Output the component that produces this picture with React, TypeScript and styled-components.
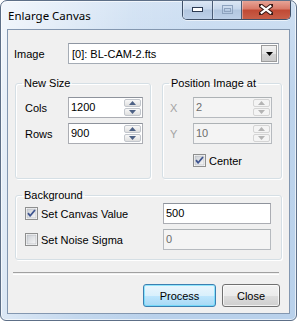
import styled, {createGlobalStyle} from "styled-components";

const GlobalStyle = createGlobalStyle`
    html, body {
        margin: 0;
        padding: 0;
        background: #ffffff;
    }

    body {
        font-family: "Liberation Sans", Arial, sans-serif;
        font-size: 11px;
        color: #000000;
    }
`

const Window = styled.div`
    display: flex;
    flex-direction: column;

    box-sizing: border-box;
    width: 297px;
    height: 321px;

    padding: 0 6px 6px 6px;

    border: 1px solid #5d6f87;
    border-radius: 7px 7px 6px 6px;

    background: linear-gradient(100deg, rgba(255, 255, 255, 0.75) 0%, rgba(255, 255, 255, 0.15) 38%, rgba(255, 255, 255, 0) 60%),
    linear-gradient(180deg, #cfe0f3 0%, #bed4ec 30%, #b9d1eb 100%);
    box-shadow: inset 0 0 0 1px rgba(255, 255, 255, 0.65);

    overflow: hidden;
`

const TitleBar = styled.div`
    display: flex;
    flex-direction: row;

    align-items: flex-start;
    justify-content: space-between;

    height: 28px;
`

const Title = styled.span`
    margin: 7px 0 0 1px;

    font-family: "Noto Sans", "Liberation Sans", sans-serif;
    font-size: 11.5px;
    line-height: 15px;
    color: #000000;
`

const CaptionButtons = styled.div`
    display: flex;
    flex-direction: row;

    margin: -1px -1px 0 0;

    border: 1px solid #3f5068;
    border-top: none;
    border-radius: 0 0 5px 5px;

    overflow: hidden;
    box-shadow: 0 1px 0 rgba(255, 255, 255, 0.6);
`

const CaptionButton = styled.div<{ $kind: "min" | "max" | "close" }>`
    display: flex;
    align-items: center;
    justify-content: center;

    width: ${({$kind}) => ($kind === "close" ? 48 : $kind === "max" ? 28 : 29)}px;
    height: 19px;

    border-left: ${({$kind}) => ($kind === "min" ? "none" : "1px solid #4a5c76")};
    box-shadow: inset 0 1px 0 rgba(255, 255, 255, 0.5), inset 1px 0 0 rgba(255, 255, 255, 0.35);

    background: ${({$kind}) => $kind === "close"
            ? "linear-gradient(180deg, #e8a99c 0%, #d97b6a 45%, #c14a35 55%, #c8604a 100%)"
            : "linear-gradient(180deg, #dfe9f5 0%, #c8d8ec 45%, #b3c7e0 55%, #bdd0e8 100%)"};
`

const Client = styled.div`
    display: flex;
    flex-direction: column;

    flex: 1;

    border: 1px solid #8397b0;

    background: #f0f0f0;
`

const ImageRow = styled.div`
    display: flex;
    flex-direction: row;
    align-items: center;

    margin-top: 13px;
    padding-left: 6px;
`

const FieldLabel = styled.span<{ $width: number, $disabled?: boolean }>`
    width: ${({$width}) => $width}px;
    flex-shrink: 0;

    color: ${({$disabled}) => ($disabled ? "#a3a3a3" : "#000000")};
`

const Combo = styled.div`
    display: flex;
    flex-direction: row;
    align-items: center;

    box-sizing: border-box;
    width: 211px;
    height: 21px;

    padding: 1px;

    border: 1px solid #a5acb5;
    border-top-color: #8e96a2;

    background: #ffffff;
`

const ComboText = styled.span`
    flex: 1;

    padding-left: 2px;
`

const ComboArrow = styled.div`
    display: flex;
    align-items: center;
    justify-content: center;

    box-sizing: border-box;
    width: 16px;
    height: 17px;

    border: 1px solid #9c9c9c;

    background: linear-gradient(180deg, #f2f2f2 0%, #e4e4e4 50%, #d2d2d2 51%, #cbcbcb 100%);
`

const GroupsRow = styled.div`
    display: flex;
    flex-direction: row;

    gap: 11px;

    margin-top: 13px;
    padding: 0 7px;
`

const Group = styled.fieldset<{ $width: number, $height: number, $padLeft: number, $padTop: number }>`
    display: flex;
    flex-direction: column;

    box-sizing: border-box;
    width: ${({$width}) => $width}px;
    height: ${({$height}) => $height}px;

    margin: 0;
    padding: ${({$padTop, $padLeft}) => `${$padTop}px 0 0 ${$padLeft}px`};

    border: 1px solid #d5dfe5;
    border-radius: 3px;

    box-shadow: inset 1px 1px 0 #ffffff, 1px 1px 0 #ffffff;

    & > legend {
        margin-left: ${({$padLeft}) => 6 - $padLeft}px;
    }
`

const Legend = styled.legend`
    padding: 0 2px;

    font-size: 11px;
    line-height: 13px;
    color: #000000;
`

const FieldRow = styled.div`
    display: flex;
    flex-direction: row;
    align-items: center;

    height: 21px;

    & + & {
        margin-top: 5px;
    }
`

const NumericBox = styled.div<{ $width: number, $disabled?: boolean }>`
    display: flex;
    flex-direction: row;

    box-sizing: border-box;
    width: ${({$width}) => $width}px;
    height: 21px;

    border: 1px solid ${({$disabled}) => ($disabled ? "#b6babf" : "#abadb3")};
    border-top-color: ${({$disabled}) => ($disabled ? "#adb2b5" : "#8e939c")};

    background: ${({$disabled}) => ($disabled ? "#f4f4f4" : "#ffffff")};
`

const NumericValue = styled.span<{ $disabled?: boolean }>`
    flex: 1;

    padding-left: 2px;

    line-height: 19px;
    color: ${({$disabled}) => ($disabled ? "#6d6d6d" : "#000000")};
`

const Spinner = styled.div`
    display: flex;
    flex-direction: column;

    gap: 1px;

    width: 17px;
    padding: 1px;
`

const SpinButton = styled.div<{ $disabled?: boolean }>`
    display: flex;
    align-items: center;
    justify-content: center;

    box-sizing: border-box;
    flex: 1;

    border: 1px solid ${({$disabled}) => ($disabled ? "#d4d4d4" : "#c2c6cc")};
    border-radius: 2px;

    background: ${({$disabled}) => ($disabled
            ? "#f4f4f4"
            : "linear-gradient(180deg, #f8f8f8 0%, #ececec 50%, #dfdfdf 100%)")};
`

const CheckRow = styled.label<{ $indent?: number }>`
    display: flex;
    flex-direction: row;
    align-items: center;

    gap: 3px;

    margin-left: ${({$indent}) => $indent ?? 0}px;
`

const CheckLabel = styled.span<{ $width?: number }>`
    width: ${({$width}) => ($width ? `${$width}px` : "auto")};
`

const CenterRow = styled.div`
    margin-top: 10px;
`

const TextBox = styled.div<{ $disabled?: boolean }>`
    box-sizing: border-box;
    width: 108px;
    height: 21px;

    padding-left: 2px;

    border: 1px solid ${({$disabled}) => ($disabled ? "#b6babf" : "#abadb3")};
    border-top-color: ${({$disabled}) => ($disabled ? "#adb2b5" : "#8e939c")};

    background: ${({$disabled}) => ($disabled ? "#f4f4f4" : "#ffffff")};

    line-height: 19px;
    color: ${({$disabled}) => ($disabled ? "#6d6d6d" : "#000000")};
`

const BackgroundWrap = styled.div`
    margin-top: 10px;
    padding: 0 7px;
`

const Separator = styled.div`
    height: 1px;

    margin: 12px 10px 0 5px;

    border-top: 1px solid #a0a0a0;
    border-bottom: 1px solid #ffffff;
`

const ButtonsRow = styled.div`
    display: flex;
    flex-direction: row;
    justify-content: flex-end;

    gap: 6px;

    margin-top: 9px;
    padding-right: 9px;
`

const Button = styled.button<{ $default?: boolean, $width: number }>`
    box-sizing: border-box;
    width: ${({$width}) => $width}px;
    height: 23px;

    padding: 0;

    border: 1px solid ${({$default}) => ($default ? "#3c7fb1" : "#707070")};
    border-radius: 3px;

    background: ${({$default}) => ($default
            ? "linear-gradient(180deg, #eaf6fd 0%, #d9f0fc 50%, #bee6fd 51%, #a7d9f5 100%)"
            : "linear-gradient(180deg, #f2f2f2 0%, #ebebeb 50%, #dddddd 51%, #cfcfcf 100%)")};
    box-shadow: inset 0 0 0 1px ${({$default}) => ($default ? "rgba(72, 216, 251, 0.55)" : "rgba(255, 255, 255, 0.7)")};

    font-family: "Liberation Sans", Arial, sans-serif;
    font-size: 11px;
    color: #000000;
`

const UpArrow = ({disabled}: { disabled?: boolean }) => (
	<svg width="7" height="4" viewBox="0 0 7 4">
		<path d="M0 4 L3.5 0 L7 4 Z" fill={disabled ? "#b4b4b4" : "#4d6185"}/>
	</svg>
)

const DownArrow = ({disabled}: { disabled?: boolean }) => (
	<svg width="7" height="4" viewBox="0 0 7 4">
		<path d="M0 0 L7 0 L3.5 4 Z" fill={disabled ? "#b4b4b4" : "#4d6185"}/>
	</svg>
)

const CheckBox = ({checked}: { checked?: boolean }) => (
	<svg width="13" height="13" viewBox="0 0 13 13">
		<defs>
			<linearGradient id="cbfill" x1="0" y1="0" x2="1" y2="1">
				<stop offset="0" stopColor="#cbcfd5"/>
				<stop offset="1" stopColor="#f7f7f7"/>
			</linearGradient>
		</defs>
		<rect x="0.5" y="0.5" width="12" height="12" fill="#ffffff" stroke="#8e8f8f"/>
		<rect x="2" y="2" width="9" height="9" fill="url(#cbfill)" stroke="#aeb3b9" strokeWidth="0.6"/>
		{checked && (
			<path d="M3 6.2 L5.2 8.8 L10 3" fill="none" stroke="#3f5590" strokeWidth="1.8"
				  strokeLinejoin="round"/>
		)}
	</svg>
)

const NumericField = ({value, width, disabled}: { value: string, width: number, disabled?: boolean }) => (
	<NumericBox $width={width} $disabled={disabled}>
		<NumericValue $disabled={disabled}>{value}</NumericValue>
		<Spinner>
			<SpinButton $disabled={disabled}><UpArrow disabled={disabled}/></SpinButton>
			<SpinButton $disabled={disabled}><DownArrow disabled={disabled}/></SpinButton>
		</Spinner>
	</NumericBox>
)

export default function App() {
	return (
		<>
			<GlobalStyle/>
			<Window>
				<TitleBar>
					<Title>Enlarge Canvas</Title>
					<CaptionButtons>
						<CaptionButton $kind="min">
							<svg width="11" height="5" viewBox="0 0 11 5">
								<rect x="0.5" y="0.5" width="10" height="4" fill="#ffffff" stroke="#2c3a52"/>
							</svg>
						</CaptionButton>
						<CaptionButton $kind="max">
							<svg width="11" height="9" viewBox="0 0 11 9">
								<rect x="0.5" y="0.5" width="10" height="8" fill="none" stroke="#8ea3bf"/>
								<rect x="2.5" y="3.5" width="6" height="3" fill="none" stroke="#8ea3bf"/>
							</svg>
						</CaptionButton>
						<CaptionButton $kind="close">
							<svg width="14" height="11" viewBox="0 0 14 11">
								<path d="M1 1 L13 10 M13 1 L1 10" stroke="#3b1a16" strokeWidth="4.2"
									  strokeLinecap="square"/>
								<path d="M1.8 1.6 L12.2 9.4 M12.2 1.6 L1.8 9.4" stroke="#ffffff" strokeWidth="2.2"/>
							</svg>
						</CaptionButton>
					</CaptionButtons>
				</TitleBar>
				<Client>
					<ImageRow>
						<FieldLabel $width={54}>Image</FieldLabel>
						<Combo>
							<ComboText>[0]: BL-CAM-2.fts</ComboText>
							<ComboArrow>
								<svg width="7" height="4" viewBox="0 0 7 4">
									<path d="M0 0 L7 0 L3.5 4 Z" fill="#000000"/>
								</svg>
							</ComboArrow>
						</Combo>
					</ImageRow>

					<GroupsRow>
						<Group $width={136} $height={102} $padLeft={9} $padTop={7}>
							<Legend>New Size</Legend>
							<FieldRow>
								<FieldLabel $width={43}>Cols</FieldLabel>
								<NumericField value="1200" width={75}/>
							</FieldRow>
							<FieldRow>
								<FieldLabel $width={43}>Rows</FieldLabel>
								<NumericField value="900" width={75}/>
							</FieldRow>
						</Group>
						<Group $width={120} $height={102} $padLeft={7} $padTop={7}>
							<Legend>Position Image at</Legend>
							<FieldRow>
								<FieldLabel $width={23} $disabled>X</FieldLabel>
								<NumericField value="2" width={79} disabled/>
							</FieldRow>
							<FieldRow>
								<FieldLabel $width={23} $disabled>Y</FieldLabel>
								<NumericField value="10" width={79} disabled/>
							</FieldRow>
							<CenterRow>
								<CheckRow $indent={23}>
									<CheckBox checked/>
									<CheckLabel>Center</CheckLabel>
								</CheckRow>
							</CenterRow>
						</Group>
					</GroupsRow>

					<BackgroundWrap>
						<Group $width={267} $height={71} $padLeft={9} $padTop={1}>
							<Legend>Background</Legend>
							<FieldRow>
								<CheckRow>
									<CheckBox checked/>
									<CheckLabel $width={122}>Set Canvas Value</CheckLabel>
								</CheckRow>
								<TextBox>500</TextBox>
							</FieldRow>
							<FieldRow>
								<CheckRow>
									<CheckBox/>
									<CheckLabel $width={122}>Set Noise Sigma</CheckLabel>
								</CheckRow>
								<TextBox $disabled>0</TextBox>
							</FieldRow>
						</Group>
					</BackgroundWrap>

					<Separator/>

					<ButtonsRow>
						<Button $default $width={73}>Process</Button>
						<Button $width={58}>Close</Button>
					</ButtonsRow>
				</Client>
			</Window>
		</>
	)
}
